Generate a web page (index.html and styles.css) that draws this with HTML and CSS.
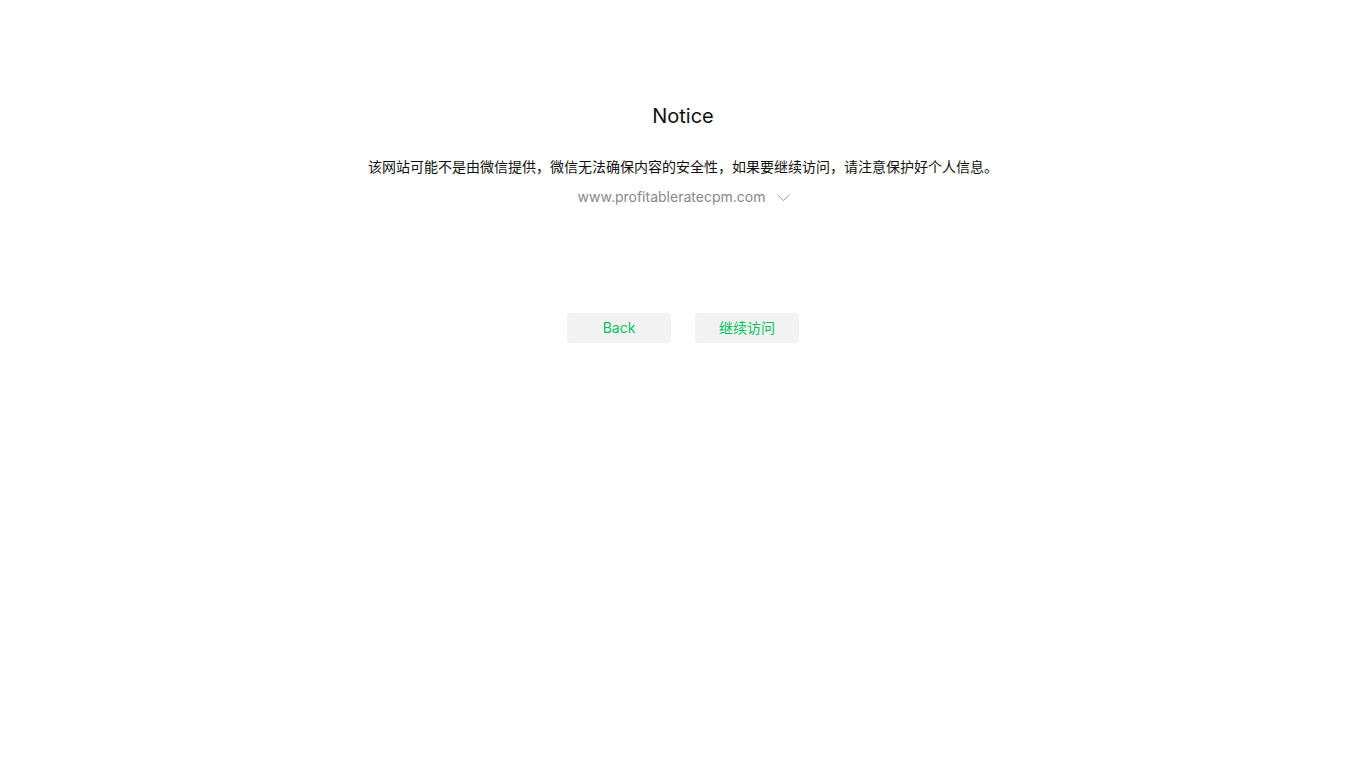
FILE: index.html
```html
<!DOCTYPE html>
<html lang="zh-CN">
<head>
<meta charset="utf-8">
<title>Notice</title>
<link rel="stylesheet" href="styles.css">
</head>
<body>
<main class="page">
  <h1 class="title">Notice</h1>
  <p class="desc">该网站可能不是由微信提供，微信无法确保内容的安全性，如果要继续访问，请注意保护好个人信息。</p>
  <div class="url">
    <span>www.profitableratecpm.com</span>
    <svg class="chev" width="13" height="8" viewBox="0 0 13 8"><path d="M0.5 0.8 L6.5 6.6 L12.5 0.8" fill="none" stroke="#9a9a9a" stroke-width="1"/></svg>
  </div>
  <div class="actions">
    <button class="btn">Back</button>
    <button class="btn">继续访问</button>
  </div>
</main>
</body>
</html>
```
FILE: styles.css
```css
html, body {
  margin: 0;
  padding: 0;
  background: #fff;
}
body {
  font-family: Inter, "Noto Sans CJK SC", sans-serif;
  color: #000;
}
.page {
  display: flex;
  flex-direction: column;
  align-items: center;
  padding-top: 102px;
}
.title {
  margin: 0;
  font-size: 20px;
  font-weight: 400;
  line-height: 28px;
  color: #111;
}
.desc {
  margin: 26px 0 0;
  font-size: 14px;
  line-height: 20px;
  font-family: "Noto Sans CJK SC", sans-serif;
  color: #111;
}
.url {
  margin-top: 11px;
  display: flex;
  align-items: center;
  gap: 12px;
  font-size: 14px;
  line-height: 20px;
  color: #888;
  padding-left: 2px;
}
.chev {
  margin-top: 2px;
}
.actions {
  margin-top: 106px;
  display: flex;
  gap: 24px;
}
.btn {
  width: 104px;
  height: 30px;
  border: none;
  border-radius: 4px;
  background: #f2f2f2;
  color: #07c160;
  font-family: Inter, "Noto Sans CJK SC", sans-serif;
  font-size: 14px;
  padding: 0 0 2px;
}
```
